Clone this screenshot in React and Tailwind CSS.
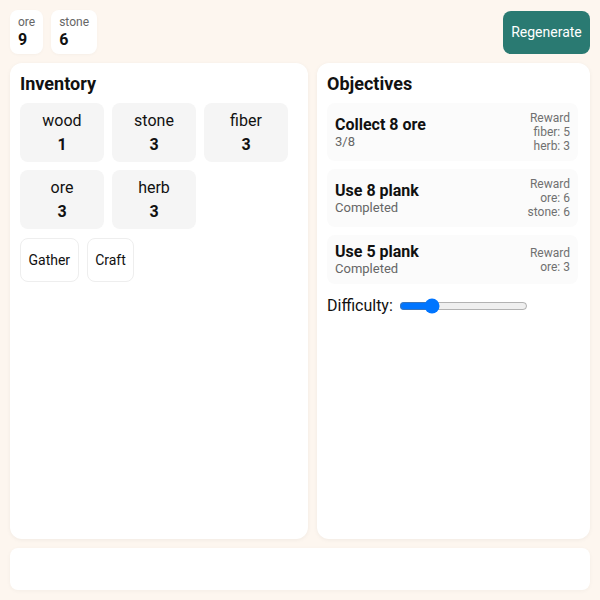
import React from "react";

const inventory = [
  { name: "wood", qty: 1 },
  { name: "stone", qty: 3 },
  { name: "fiber", qty: 3 },
  { name: "ore", qty: 3 },
  { name: "herb", qty: 3 },
];

const objectives = [
  { title: "Collect 8 ore", status: "3/8", rewards: ["fiber: 5", "herb: 3"] },
  { title: "Use 8 plank", status: "Completed", rewards: ["ore: 6", "stone: 6"] },
  { title: "Use 5 plank", status: "Completed", rewards: ["ore: 3"] },
];

export default function App() {
  return (
    <div
      className="h-[600px] w-[600px] bg-[#fdf6ef] p-[10px] flex flex-col gap-[9px] text-[#111]"
      style={{ fontFamily: "Roboto, 'Noto Sans', sans-serif" }}
    >
      <div className="flex items-start justify-between">
        <div className="flex gap-2">
          {[
            { k: "ore", v: 9 },
            { k: "stone", v: 6 },
          ].map((s) => (
            <div key={s.k} className="bg-white rounded-lg px-2 py-1 h-[44px] flex flex-col justify-center shadow-[0_1px_3px_rgba(0,0,0,0.03)]">
              <div className="text-[12px] leading-[15px] text-[#666]">{s.k}</div>
              <div className="text-[16px] leading-[20px] font-bold">{s.v}</div>
            </div>
          ))}
        </div>
        <button className="mt-px h-[43px] w-[87px] rounded-lg bg-[#2a7a72] text-white text-[14px]">
          Regenerate
        </button>
      </div>

      <div className="flex-1 grid grid-cols-[298px_1fr] gap-[9px] min-h-0">
        <div className="bg-white rounded-xl p-2.5 shadow-[0_1px_4px_rgba(0,0,0,0.05)]">
          <h2 className="text-[18px] leading-[22px] font-bold mb-2">Inventory</h2>
          <div className="flex flex-wrap gap-2 w-[268px]">
            {inventory.map((it) => (
              <div key={it.name} className="w-[84px] h-[59px] bg-[#f5f5f5] rounded-lg flex flex-col items-center justify-center">
                <div className="text-[16px] leading-[24px]">{it.name}</div>
                <div className="text-[16px] leading-[24px] font-bold">{it.qty}</div>
              </div>
            ))}
          </div>
          <div className="flex gap-2 mt-[9px]">
            <button className="h-[44px] px-[7.5px] bg-white border border-[#eeeeee] rounded-lg text-[14px]">Gather</button>
            <button className="h-[44px] px-[7.5px] bg-white border border-[#eeeeee] rounded-lg text-[14px]">Craft</button>
          </div>
        </div>

        <div className="bg-white rounded-xl p-2.5 shadow-[0_1px_4px_rgba(0,0,0,0.05)]">
          <h2 className="text-[18px] leading-[22px] font-bold mb-2">Objectives</h2>
          <div className="flex flex-col gap-2 pr-[2px]">
            {objectives.map((o) => (
              <div key={o.title} className="bg-[#fbfbfb] rounded-lg px-2 py-2 flex items-center justify-between">
                <div className="flex flex-col">
                  <div className="text-[16px] leading-[18px] font-bold">{o.title}</div>
                  <div className="text-[13px] leading-[15px] text-[#666]">{o.status}</div>
                </div>
                <div className="text-[12px] leading-[14px] text-[#707070] text-right">
                  <div>Reward</div>
                  {o.rewards.map((r) => (
                    <div key={r}>{r}</div>
                  ))}
                </div>
              </div>
            ))}
          </div>
          <div className="flex items-center gap-1.5 mt-2 h-[28px]">
            <span className="text-[16px]">Difficulty:</span>
            <input type="range" min="1" max="10" defaultValue="3" className="w-[129px]" />
          </div>
        </div>
      </div>

      <div className="h-[42px] bg-white rounded-lg shadow-[0_1px_4px_rgba(0,0,0,0.04)]"></div>
    </div>
  );
}
